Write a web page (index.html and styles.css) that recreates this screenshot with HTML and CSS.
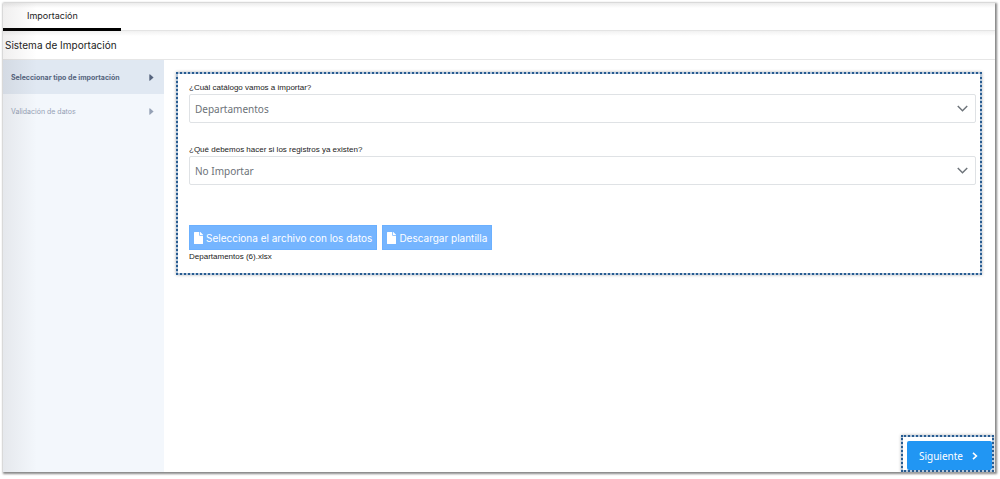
FILE: index.html
```
<!DOCTYPE html>
<html lang="es">
<head>
    <meta charset="UTF-8">
    <title>Sistema de Importación</title>
    <link rel="stylesheet" href="styles.css">
</head>
<body>
<div class="window">
    <nav class="tabs">
        <a href="#" class="tab">Importación</a>
    </nav>
    <h1 class="title">Sistema de Importación</h1>
    <div class="content">
        <ul class="steps">
            <li><a href="#" class="step current">Seleccionar tipo de importación
                <svg class="arrow" viewBox="0 0 5 8"><path d="M0 1Q0 0 1 .6L4.6 3.6Q5 4 4.6 4.4L1 7.4Q0 8 0 7Z"/></svg></a></li>
            <li><a href="#" class="step">Validación de datos
                <svg class="arrow" viewBox="0 0 5 8"><path d="M0 1Q0 0 1 .6L4.6 3.6Q5 4 4.6 4.4L1 7.4Q0 8 0 7Z"/></svg></a></li>
        </ul>
        <form class="main">
            <div class="panel">
                <div class="field">
                    <label for="catalogo">¿Cuál catálogo vamos a importar?</label>
                    <div class="select">
                        <select id="catalogo"><option>Departamentos</option></select>
                        <svg class="chevron" viewBox="0 0 10 6"><path d="M.7.7L5 5L9.3.7"/></svg>
                    </div>
                </div>
                <div class="field">
                    <label for="existentes">¿Qué debemos hacer si los registros ya existen?</label>
                    <div class="select">
                        <select id="existentes"><option>No Importar</option></select>
                        <svg class="chevron" viewBox="0 0 10 6"><path d="M.7.7L5 5L9.3.7"/></svg>
                    </div>
                </div>
                <div class="files">
                    <button type="button" class="file-btn"><svg class="file" viewBox="0 0 384 512"><path d="M224 136V0H24C11 0 0 11 0 24v464c0 13 11 24 24 24h336c13 0 24-11 24-24V160H248c-13 0-24-11-24-24zm160-14v6H256V0h6c6 0 12 3 17 7l98 98c4 5 7 11 7 17z"/></svg>Selecciona el archivo con los datos</button>
                    <button type="button" class="file-btn"><svg class="file" viewBox="0 0 384 512"><path d="M224 136V0H24C11 0 0 11 0 24v464c0 13 11 24 24 24h336c13 0 24-11 24-24V160H248c-13 0-24-11-24-24zm160-14v6H256V0h6c6 0 12 3 17 7l98 98c4 5 7 11 7 17z"/></svg>Descargar plantilla</button>
                </div>
                <p class="filename">Departamentos (6).xlsx</p>
            </div>
            <div class="next">
                <button type="button" class="next-btn">Siguiente
                    <svg class="next-icon" viewBox="0 0 6 8"><path d="M1 .8L4.4 4L1 7.2"/></svg></button>
            </div>
        </form>
    </div>
</div>
</body>
</html>
```

FILE: styles.css
```
* {
    margin: 0;
    padding: 0;
    box-sizing: border-box;
}

body {
    display: flex;
    min-height: 100vh;
    padding: 3px 5px 7px 3px;
    background-color: #fff;
    font-family: Inter, "Liberation Sans", sans-serif;
    color: #222;
}

.window {
    position: relative;
    flex: 1;
    display: flex;
    flex-direction: column;
    background-color: #fff;
    box-shadow: 1px 1px 2px 1px #888;
}

/* sombra interior del marco */
.window::after {
    content: "";
    position: absolute;
    inset: 0;
    pointer-events: none;
    background: linear-gradient(to right, rgba(90, 80, 80, .09), transparent 34px);
}

.tabs {
    display: flex;
    height: 28px;
    border-bottom: 1px solid #e4e4e4;
    background: linear-gradient(#ececec, #fff 5px);
}

.tab {
    width: 118px;
    height: 28px;
    padding-left: 24px;
    border-bottom: 3px solid #000;
    font-size: 9px;
    line-height: 25px;
    color: #222;
    text-decoration: none;
}

.title {
    height: 29px;
    padding-left: 2px;
    border-bottom: 1px solid #e6e6e6;
    background: linear-gradient(#f1f1f1, #fff 5px);
    font-size: 10px;
    font-weight: 400;
    line-height: 28px;
}

.content {
    flex: 1;
    display: flex;
}

.steps {
    width: 161px;
    list-style-type: none;
    background-color: #f3f7fc;
}

.step {
    display: flex;
    align-items: center;
    justify-content: space-between;
    height: 34px;
    padding: 0 10px 0 8px;
    font-size: 7px;
    color: #95a1b5;
    text-decoration: none;
}

.step.current {
    background-color: #e0e8f2;
    font-weight: 700;
    color: #56647e;
}

.arrow {
    width: 5px;
    height: 7px;
    fill: currentColor;
}

.main {
    flex: 1;
    display: flex;
    flex-direction: column;
    justify-content: space-between;
    padding: 12px 0 0 12px;
}

.panel,
.next {
    border: 2px dotted #285c91;
    background: linear-gradient(#fff, #fff) padding-box, #b4c6da border-box;
    box-shadow: 0 0 3px #bbb;
}

.panel {
    margin-right: 13px;
    padding: 8px 4px 10px 11px;
}

.field {
    margin-bottom: 21px;
}

.field label {
    display: block;
    font-family: "Liberation Sans", sans-serif;
    font-size: 8px;
    line-height: 12px;
}

.select {
    position: relative;
}

.select select {
    display: block;
    width: 100%;
    height: 29px;
    padding: 0 5px;
    border: 1px solid #dfe2e5;
    border-radius: 2px;
    background-color: #fff;
    appearance: none;
    font-family: "Noto Sans", sans-serif;
    font-size: 10px;
    color: #6c7278;
}

.chevron {
    position: absolute;
    top: 11px;
    right: 8px;
    width: 11px;
    height: 7px;
    fill: none;
    stroke: #6c7278;
    stroke-width: 1.3;
    pointer-events: none;
}

.files {
    display: flex;
    gap: 5px;
    margin-top: 40px;
}

.file-btn {
    display: flex;
    align-items: center;
    gap: 3px;
    height: 25px;
    padding: 0 4px;
    border: 1px solid #6bb0ff;
    background-color: #75b5ff;
    font-family: inherit;
    font-size: 10px;
    color: #fff;
}

.file {
    width: 9px;
    height: 12px;
    fill: #fff;
}

.filename {
    margin-top: 1px;
    font-family: "Liberation Sans", sans-serif;
    font-size: 8px;
    line-height: 12px;
}

.next {
    align-self: flex-end;
    margin-right: 1px;
    padding: 4px 0 0 4px;
}

.next-btn {
    display: flex;
    align-items: center;
    gap: 9px;
    height: 29px;
    padding: 0 14px 0 12px;
    border: 0;
    border-radius: 2px;
    background-color: #2196f3;
    font-family: "Noto Sans", sans-serif;
    font-size: 10px;
    color: #fff;
}

.next-icon {
    width: 6px;
    height: 8px;
    fill: none;
    stroke: #fff;
    stroke-width: 1.6;
}
```
